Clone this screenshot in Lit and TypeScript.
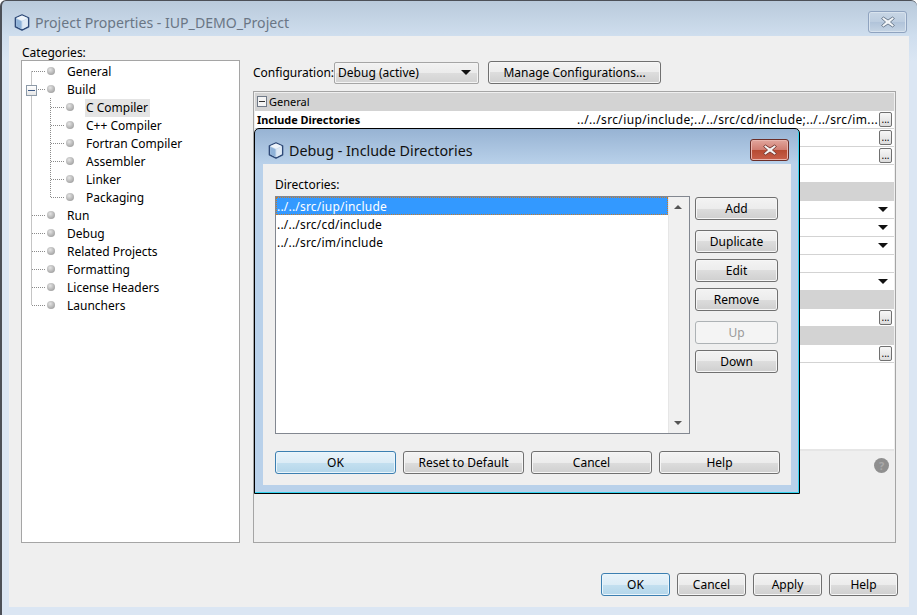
import { LitElement, html, css, svg } from "lit";
import { customElement } from "lit/decorators.js";

const cube = () => html`<svg class="cube" width="16" height="17" viewBox="1 0 16 18">
  <path d="M9 1 L16 4 V13.5 L9 17 L2 13.5 V4 Z" fill="#c9dcee" stroke="#2f4a78" stroke-width="1.5" stroke-linejoin="round"/>
  <path d="M9 1.7 L15.2 4.3 L9 7.2 L2.8 4.3 Z" fill="#eef4fa"/>
  <path d="M2.9 5 L8.5 7.7 V16 L2.9 13 Z" fill="#8fb2d8"/>
  <path d="M9.5 7.7 L15.1 5 V13 L9.5 16 Z" fill="#dfe9f4"/>
</svg>`;

const closeX = (fill: string, stroke: string) => html`<svg width="16" height="12" viewBox="0 0 16 12">
  <path d="M3.5 1 L8 4 L12.5 1 L14.5 2.5 L10.5 6 L14.5 9.5 L12.5 11 L8 8 L3.5 11 L1.5 9.5 L5.5 6 L1.5 2.5 Z" fill=${fill} stroke=${stroke} stroke-width="1" stroke-linejoin="round"/>
</svg>`;

const TREE = [
  { t: "General", l: 0 }, { t: "Build", l: 0, open: true },
  { t: "C Compiler", l: 1, sel: true }, { t: "C++ Compiler", l: 1 }, { t: "Fortran Compiler", l: 1 },
  { t: "Assembler", l: 1 }, { t: "Linker", l: 1 }, { t: "Packaging", l: 1 },
  { t: "Run", l: 0 }, { t: "Debug", l: 0 }, { t: "Related Projects", l: 0 }, { t: "Formatting", l: 0 },
  { t: "License Headers", l: 0 }, { t: "Launchers", l: 0 },
];

type Row = { k: "head" | "dots" | "plain" | "drop"; label?: string; bold?: boolean; value?: string };
const ROWS: Row[] = [
  { k: "head", label: "General" },
  { k: "dots", label: "Include Directories", bold: true, value: "../../src/iup/include;../../src/cd/include;../../src/im..." },
  { k: "dots" }, { k: "dots" }, { k: "plain" },
  { k: "head" },
  { k: "drop" }, { k: "drop" }, { k: "drop" }, { k: "plain" }, { k: "drop" },
  { k: "head" }, { k: "dots" },
  { k: "head" }, { k: "dots" },
];

@customElement("app-root")
export class AppRoot extends LitElement {
  static styles = css`
    :host { display: block; width: 917px; height: 615px; overflow: hidden; position: relative;
      font-family: "Noto Sans", sans-serif; font-size: 12px; color: #000; background: #fff; }
    * { box-sizing: border-box; }
    .window { height: 615px; display: flex; flex-direction: column; background: #dbe6f3;
      border: 1px solid #4c5057; border-width: 1px 0 0 2px; border-radius: 6px 6px 0 0; padding: 0 8px 8px 7px;
      background-image: linear-gradient(#b9cadb 0, #cfdeee 35px, #dbe6f3 60px); }
    .titlebar { height: 35px; display: flex; align-items: center; gap: 5px; flex: none; padding: 7px 2px 0 5px; }
    .titlebar .title { font-size: 14.1px; color: #6a7685; flex: 1; white-space: nowrap; }
    .win-close { width: 39px; height: 22px; border: 1px solid #8fa3bf; border-radius: 3px;
      display: flex; align-items: center; justify-content: center;
      background: linear-gradient(#c8d6e5, #bccde0 50%, #b0c3d9 50%, #c5d4e4); box-shadow: inset 0 0 0 1px #d8e3ee; }
    .body { flex: 1; background: #efefef; padding: 9px 13px 11px 12px; display: grid;
      grid-template-columns: 219px 643px; column-gap: 13px; grid-template-rows: 1fr auto; row-gap: 30px; min-height: 0; }
    .left { display: flex; flex-direction: column; min-height: 0; }
    .cat-label { height: 15px; line-height: 16px; padding-left: 1px; }
    .tree { flex: 1; position: relative; background: #fff; border: 1px solid #a5a5a5; padding-top: 2px; }
    .lines { position: absolute; left: 0; top: 0; pointer-events: none; }
    .node { height: 18px; display: flex; align-items: center; position: relative; line-height: 18px; white-space: nowrap; }
    .node .dot { width: 8px; height: 8px; border-radius: 50%; flex: none; margin-top: -2px;
      background: radial-gradient(circle at 40% 35%, #e4e4e4, #a8a8a8 70%, #8a8a8a); }
    .node .txt { padding: 0 2px 0 1px; height: 18px; }
    .l0 { padding-left: 25px; } .l0 .txt { margin-left: 11px; }
    .l1 { padding-left: 44px; } .l1 .txt { margin-left: 11px; }
    .sel { background: #e4e4e4; }
    .box { position: absolute; left: 4px; top: 4px; width: 11px; height: 11px; border: 1px solid #8d9aa8;
      background: linear-gradient(#fff, #e6e6e6); display: flex; align-items: center; justify-content: center; }
    .box::after { content: ""; display: block; width: 7px; height: 1px; background: #3d5a87; }
    .right { display: flex; flex-direction: column; padding-top: 16px; min-height: 0; }
    .config { display: flex; align-items: center; height: 23px; flex: none; }
    .select { width: 145px; height: 22px; border: 1px solid #a5a5a5; border-radius: 2px; display: flex; align-items: center;
      justify-content: space-between; padding: 0 7px 0 3px; box-shadow: inset 0 0 0 1px #f4f4f4;
      background: linear-gradient(#f2f2f2, #ebebeb 50%, #dddddd 50%, #d2d2d2); }
    .arrow { width: 0; height: 0; border-left: 5px solid transparent; border-right: 5px solid transparent; border-top: 5px solid #111; }
    .btn { display: flex; align-items: center; justify-content: center; height: 23px; flex: none; border: 1px solid #707070; border-radius: 3px;
      background: linear-gradient(#f3f3f3, #ececec 50%, #dddddd 50%, #cfcfcf); box-shadow: inset 0 0 0 1px #f6f6f6; white-space: nowrap; }
    .btn.def { border-color: #3c7fb1; background: linear-gradient(#e8f3fa, #dcecf6 50%, #c4e0f0 50%, #b4d6ea); box-shadow: inset 0 0 0 1px #eaf5fb; }
    .btn.off { color: #9a9a9a; border-color: #adb2b5; background: #f4f4f4; box-shadow: none; }
    .manage { width: 173px; margin-left: 9px; }
    .panel { flex: 1; margin-top: 7px; border: 1px solid #a5a5a5; padding: 1px; display: flex; flex-direction: column; min-height: 0; }
    .grid { height: 358px; background: #fff; flex: none; border-bottom: 2px solid #e6e6e6; }
    .row { height: 18px; display: flex; align-items: center; border-bottom: 1px solid #d3d3d3; white-space: nowrap; }
    .row.head { background: #d3d3d3; font-size: 11px; padding-left: 2px; gap: 2px; }
    .row .minus { width: 10px; height: 11px; border: 1px solid #707a88; background: #f4f4f4; display: flex; align-items: center; justify-content: center; }
    .row .minus::after { content: ""; width: 6px; height: 1px; background: #333; }
    .row .name { width: 320px; padding-left: 2px; font-size: 10.9px; }
    .row .name.b { font-weight: 700; }
    .row .val { flex: 1; padding-left: 2px; overflow: hidden; letter-spacing: 0.37px; }
    .dots { width: 13px; height: 15px; margin-right: 2px; border: 1px solid #707070; border-radius: 2px; font-size: 10px; line-height: 13px; text-align: center;
      background: linear-gradient(#f7f7f7, #dcdcdc); flex: none; margin-left: auto; }
    .row .arrow { margin-left: auto; margin-right: 6px; }
    .help-row { flex: none; display: flex; justify-content: flex-end; padding: 7px 5px 0 0; }
    .help { width: 15px; height: 15px; border-radius: 50%; background: #8f8f8f; color: #a9a9a9; font-size: 11px; font-weight: 700; line-height: 15px; text-align: center; }
    .footer { grid-column: 1 / 3; display: flex; justify-content: flex-end; gap: 7px; margin-right: -2px; }
    .footer .btn { width: 69px; }
    .dialog { position: absolute; left: 254px; top: 128px; width: 546px; height: 366px; display: flex; flex-direction: column;
      border: 1px solid #000; border-radius: 5px 5px 0 0; box-shadow: inset -1px -1px 0 #35d4f0; padding: 0 8px 8px 8px;
      background: linear-gradient(#97b3d3 0, #b9d1ea 35px); }
    .dlg-title { height: 35px; flex: none; display: flex; align-items: center; gap: 5px; padding: 7px 0 0 5px; }
    .dlg-title .title { font-size: 14.3px; flex: 1; color: #111; }
    .dlg-close { width: 39px; height: 22px; margin-right: 2px; border: 1px solid #6b2e28; border-radius: 3px; display: flex; align-items: center; justify-content: center;
      background: linear-gradient(#e2a69d, #cf7c70 50%, #b64a31 50%, #c8604b); box-shadow: inset 0 0 0 1px #e9b5ad; }
    .dlg-body { flex: 1; background: #efefef; padding: 13px 11px 11px 12px; display: flex; flex-direction: column; min-height: 0; }
    .dlg-label { height: 19px; line-height: 16px; }
    .dlg-main { display: flex; gap: 5px; height: 238px; flex: none; }
    .list { width: 415px; border: 1px solid #828790; display: flex; background: #fff; }
    .items { flex: 1; }
    .item { height: 18px; line-height: 20px; padding-left: 1px; letter-spacing: 0.2px; }
    .item.on { background: #3399ff; color: #fff; outline: 1px dotted #c77a2a; outline-offset: -1px; }
    .scroll { width: 21px; background: #f0f0f0; border-left: 1px solid #e6e6e6; display: flex; flex-direction: column; justify-content: space-between; align-items: center; padding: 8px 2px 8px 0; }
    .up { width: 0; height: 0; border-left: 4px solid transparent; border-right: 4px solid transparent; border-bottom: 4px solid #555; }
    .down { width: 0; height: 0; border-left: 4px solid transparent; border-right: 4px solid transparent; border-top: 4px solid #555; }
    .side { width: 83px; padding-top: 1px; display: flex; flex-direction: column; gap: 6px; }
    .side .gap { margin-top: 4px; }
    .dlg-foot { display: flex; gap: 7px; margin-top: 17px; }
    .dlg-foot .btn { width: 121px; }
  `;

  private tree() {
    return TREE.map((n) => html`<div class="node l${n.l}">
      ${n.open ? html`<span class="box"></span>` : ""}
      <span class="dot"></span><span class="txt ${n.sel ? "sel" : ""}">${n.t}</span></div>`);
  }

  private lines() {
    return html`<svg class="lines" width="217" height="300" fill="none" stroke="#8a8a8a" stroke-dasharray="1 1">
      ${svg`<path d="M9.5 10.5 V244.5" />`}
      ${svg`<path d="M28.5 37 V136.5" />`}
      ${[10, 28, 154, 172, 190, 208, 226, 244].map((y) => svg`<path d="M10 ${y + 0.5} H24" />`)}
      ${[46, 64, 82, 100, 118, 136].map((y) => svg`<path d="M29 ${y + 0.5} H43" />`)}
    </svg>`;
  }

  private row(r: Row) {
    if (r.k === "head")
      return html`<div class="row head">${r.label ? html`<span class="minus"></span>${r.label}` : ""}</div>`;
    return html`<div class="row">
      ${r.label ? html`<span class="name ${r.bold ? "b" : ""}">${r.label}</span>` : ""}
      ${r.value ? html`<span class="val">${r.value}</span>` : ""}
      ${r.k === "dots" ? html`<span class="dots">...</span>` : ""}
      ${r.k === "drop" ? html`<span class="arrow"></span>` : ""}
    </div>`;
  }

  render() {
    return html`
      <div class="window">
        <div class="titlebar">
          ${cube()}<span class="title">Project Properties - IUP_DEMO_Project</span>
          <span class="win-close">${closeX("#f2f5f8", "#6d7d90")}</span>
        </div>
        <div class="body">
          <div class="left">
            <div class="cat-label">Categories:</div>
            <div class="tree">${this.lines()}${this.tree()}</div>
          </div>
          <div class="right">
            <div class="config">Configuration:
              <div class="select">Debug (active)<span class="arrow"></span></div>
              <div class="btn manage">Manage Configurations...</div>
            </div>
            <div class="panel">
              <div class="grid">${ROWS.map((r) => this.row(r))}</div>
              <div class="help-row"><span class="help">?</span></div>
            </div>
          </div>
          <div class="footer">
            <div class="btn def">OK</div><div class="btn">Cancel</div><div class="btn">Apply</div><div class="btn">Help</div>
          </div>
        </div>
      </div>
      <div class="dialog">
        <div class="dlg-title">${cube()}<span class="title">Debug - Include Directories</span>
          <span class="dlg-close">${closeX("#f5f5f5", "#7a3a32")}</span></div>
        <div class="dlg-body">
          <div class="dlg-label">Directories:</div>
          <div class="dlg-main">
            <div class="list">
              <div class="items">
                <div class="item on">../../src/iup/include</div>
                <div class="item">../../src/cd/include</div>
                <div class="item">../../src/im/include</div>
              </div>
              <div class="scroll"><span class="up"></span><span class="down"></span></div>
            </div>
            <div class="side">
              <div class="btn">Add</div>
              <div class="btn gap">Duplicate</div>
              <div class="btn">Edit</div>
              <div class="btn">Remove</div>
              <div class="btn off gap">Up</div>
              <div class="btn">Down</div>
            </div>
          </div>
          <div class="dlg-foot">
            <div class="btn def">OK</div><div class="btn">Reset to Default</div><div class="btn">Cancel</div><div class="btn">Help</div>
          </div>
        </div>
      </div>`;
  }
}
